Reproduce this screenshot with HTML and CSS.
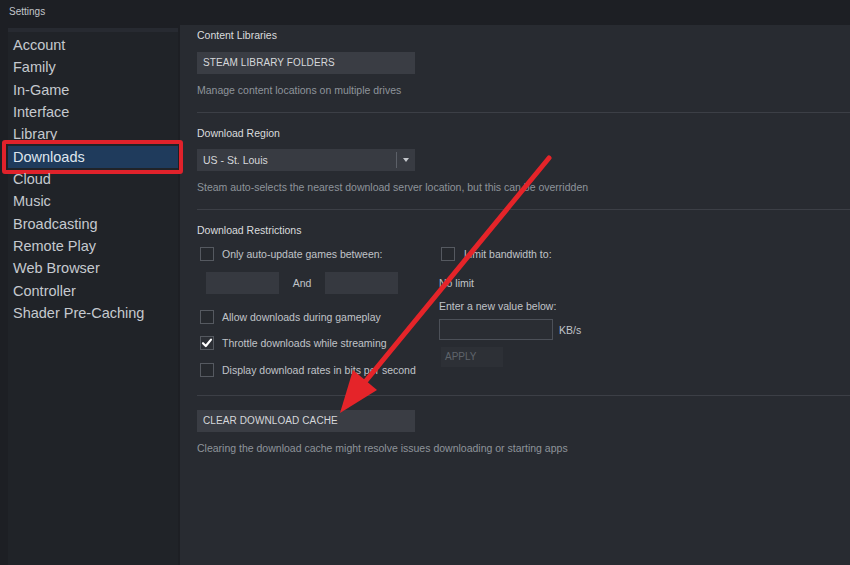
FILE: index.html
```html
<!DOCTYPE html>
<html>
<head>
<meta charset="utf-8">
<link rel="stylesheet" href="styles.css">
</head>
<body>
<div class="titlebar">Settings</div>
<div class="main">
  <nav class="sidebar">
    <div class="topband"></div>
    <div class="item">Account</div>
    <div class="item">Family</div>
    <div class="item">In-Game</div>
    <div class="item">Interface</div>
    <div class="item">Library</div>
    <div class="item active">Downloads<span class="redbox"></span></div>
    <div class="item">Cloud</div>
    <div class="item">Music</div>
    <div class="item">Broadcasting</div>
    <div class="item">Remote Play</div>
    <div class="item">Web Browser</div>
    <div class="item">Controller</div>
    <div class="item">Shader Pre-Caching</div>
  </nav>
  <section class="content">
    <div class="head h1">Content Libraries</div>
    <div class="btn b1">STEAM LIBRARY FOLDERS</div>
    <div class="desc d1">Manage content locations on multiple drives</div>
    <div class="sep s1"></div>

    <div class="head h2">Download Region</div>
    <div class="select">
      <span class="seltext">US - St. Louis</span>
      <span class="selside"><span class="tri"></span></span>
    </div>
    <div class="desc d2">Steam auto-selects the nearest download server location, but this can be overridden</div>
    <div class="sep s2"></div>

    <div class="head h3">Download Restrictions</div>
    <div class="restrict">
      <div class="col left">
        <div class="row r1"><span class="cb"></span><span class="lbl">Only auto-update games between:</span></div>
        <div class="timerow">
          <span class="tinput"></span><span class="and">And</span><span class="tinput"></span>
        </div>
        <div class="row r2"><span class="cb"></span><span class="lbl">Allow downloads during gameplay</span></div>
        <div class="row r3"><span class="cb checked"><svg viewBox="0 0 14 14" width="14" height="14"><path d="M3 7.2 L5.8 10 L11 3.6" fill="none" stroke="#ffffff" stroke-width="2.2" stroke-linecap="round" stroke-linejoin="round"/></svg></span><span class="lbl">Throttle downloads while streaming</span></div>
        <div class="row r4"><span class="cb"></span><span class="lbl">Display download rates in bits per second</span></div>
      </div>
      <div class="col right">
        <div class="row r1"><span class="cb"></span><span class="lbl">Limit bandwidth to:</span></div>
        <div class="plain p1">No limit</div>
        <div class="plain p2">Enter a new value below:</div>
        <div class="kbrow"><span class="kbinput"></span><span class="kb">KB/s</span></div>
        <div class="apply">APPLY</div>
      </div>
    </div>
    <div class="sep s3"></div>

    <div class="btn b2">CLEAR DOWNLOAD CACHE</div>
    <div class="desc d3">Clearing the download cache might resolve issues downloading or starting apps</div>
  </section>
</div>
<svg class="arrow" width="850" height="565" viewBox="0 0 850 565">
  <line x1="549" y1="158" x2="360" y2="388" stroke="#e52429" stroke-width="5" stroke-linecap="round"/>
  <polygon points="340,413 353,370 377,390" fill="#e52429"/>
</svg>
</body>
</html>
```
FILE: styles.css
```css
html, body {
  margin: 0;
  padding: 0;
}
body {
  width: 850px;
  height: 565px;
  overflow: hidden;
  background: #1d1f24;
  font-family: "Liberation Sans", Arial, sans-serif;
  position: relative;
}
.titlebar {
  height: 25px;
  line-height: 24px;
  padding-left: 9px;
  font-size: 10px;
  color: #c3c6cb;
}
.main {
  display: flex;
  height: 540px;
}
.sidebar {
  width: 170px;
  margin-left: 8px;
  margin-top: 3px;
  background: #202328;
  display: flex;
  flex-direction: column;
}
.topband {
  height: 4px;
  background: #272a31;
  margin-bottom: 2px;
}
.item {
  position: relative;
  height: 22.35px;
  line-height: 22.35px;
  padding-left: 5px;
  font-size: 14.5px;
  color: #c5c9cf;
}
.item.active {
  background: #1f3b5c;
  color: #dfe6ee;
}
.redbox {
  position: absolute;
  left: -6px;
  right: -5px;
  top: -6px;
  bottom: -6px;
  border: 4px solid #e0222b;
  border-radius: 3px;
}
.content {
  flex: 1;
  margin-left: 2px;
  background: #282b31;
  padding-left: 17px;
  display: flex;
  flex-direction: column;
}
.head {
  font-size: 10.5px;
  line-height: 14px;
  color: #dadcde;
}
.h1 { margin-top: 3px; }
.h2 { margin-top: 13px; }
.h3 { margin-top: 13px; }
.btn {
  width: 212px;
  height: 22px;
  line-height: 22px;
  padding-left: 6px;
  background: #3a3d44;
  color: #d6d8db;
  font-size: 10px;
  letter-spacing: 0.1px;
}
.b1 { margin-top: 10px; }
.b2 { margin-top: 14px; }
.desc {
  font-size: 10.5px;
  line-height: 14px;
  color: #8e949b;
}
.d1, .d2, .d3 { margin-top: 9px; }
.sep {
  height: 1px;
  background: #3c3f46;
}
.s1 { margin-top: 15px; }
.s2 { margin-top: 15px; }
.s3 { margin-top: 14px; }
.select {
  margin-top: 9px;
  width: 218px;
  height: 22px;
  background: #383b42;
  display: flex;
  align-items: center;
}
.seltext {
  flex: 1;
  padding-left: 6px;
  font-size: 10.5px;
  color: #d6d8db;
}
.selside {
  width: 18px;
  height: 16px;
  border-left: 1px solid #5c6068;
  display: flex;
  align-items: center;
  justify-content: center;
}
.tri {
  width: 0;
  height: 0;
  border-left: 3.5px solid transparent;
  border-right: 3.5px solid transparent;
  border-top: 4px solid #c4c7cc;
}
.restrict {
  display: flex;
  height: 144px;
}
.col {
  display: flex;
  flex-direction: column;
}
.left { width: 242px; }
.right { width: 200px; }
.row {
  height: 20px;
  display: flex;
  align-items: center;
}
.r1 { margin-top: 7px; }
.r2 { margin-top: 13px; }
.r3 { margin-top: 6px; }
.r4 { margin-top: 7px; }
.left .row { padding-left: 3px; }
.right .row { padding-left: 2px; }
.cb {
  width: 12px;
  height: 12px;
  border: 1px solid #555960;
  background: #26292e;
  display: flex;
  align-items: center;
  justify-content: center;
}
.cb svg { flex: none; }
.cb.checked { background: #2c2f35; }
.lbl {
  margin-left: 8px;
  font-size: 10.5px;
  color: #c0c4c9;
}
.right .lbl { margin-left: 9px; }
.timerow {
  margin-top: 8px;
  height: 22px;
  display: flex;
  align-items: center;
  padding-left: 9px;
}
.tinput {
  width: 73px;
  height: 22px;
  background: #363940;
}
.and {
  width: 46px;
  text-align: center;
  font-size: 10.5px;
  color: #c0c4c9;
}
.plain {
  font-size: 10.5px;
  line-height: 14px;
  color: #c0c4c9;
}
.p1 { margin-top: 12px; }
.p2 { margin-top: 9px; }
.kbrow {
  margin-top: 6px;
  display: flex;
  align-items: center;
}
.kbinput {
  width: 112px;
  height: 19px;
  border: 1px solid #4c5058;
  background: #2a2d33;
}
.kb {
  margin-left: 6px;
  font-size: 10.5px;
  color: #c0c4c9;
}
.apply {
  margin-top: 7px;
  margin-left: 2px;
  width: 58px;
  height: 20px;
  line-height: 20px;
  padding-left: 4px;
  background: #2d3036;
  color: #5f646b;
  font-size: 10px;
}
.arrow {
  position: absolute;
  left: 0;
  top: 0;
  pointer-events: none;
}
```
